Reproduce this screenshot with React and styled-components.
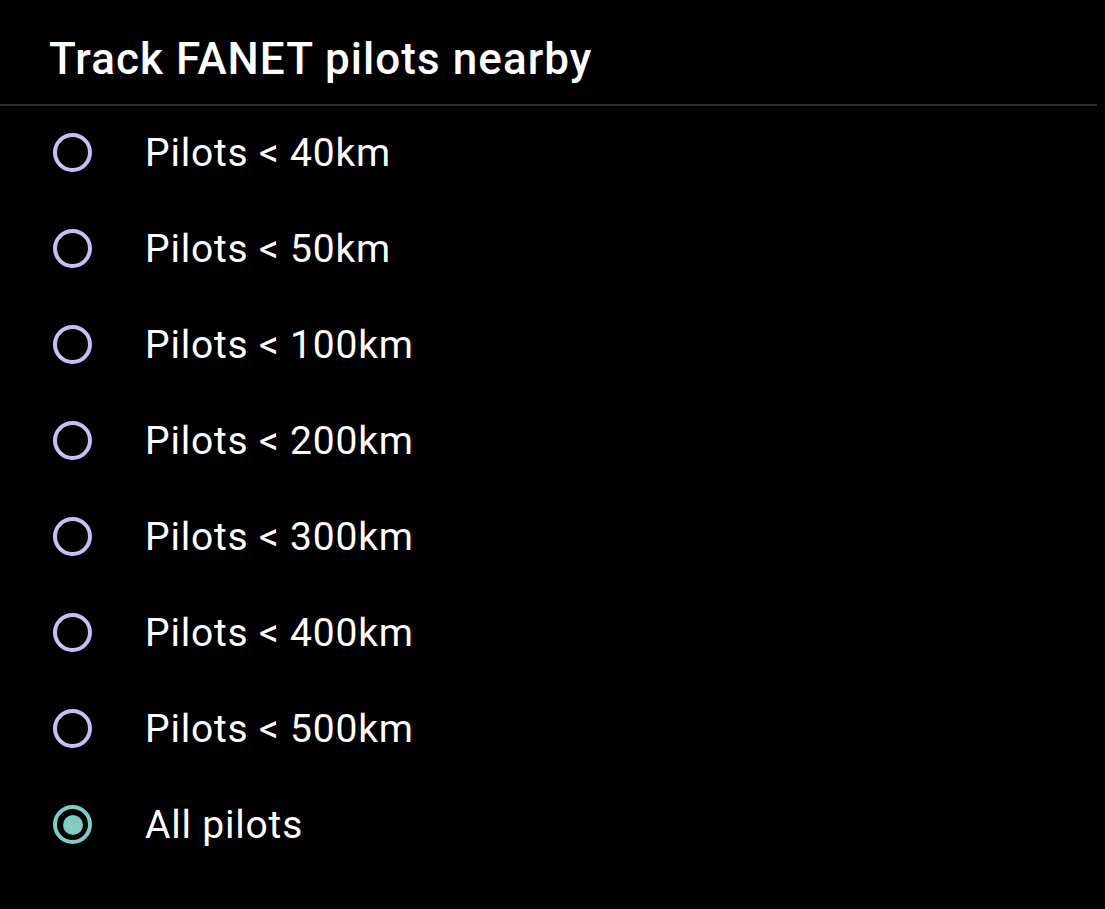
import React, { useState } from "react";
import styled, { createGlobalStyle } from "styled-components";

const options = [
  "Pilots < 40km",
  "Pilots < 50km",
  "Pilots < 100km",
  "Pilots < 200km",
  "Pilots < 300km",
  "Pilots < 400km",
  "Pilots < 500km",
  "All pilots",
];

const App = () => {
  const [selected, setSelected] = useState(options.length - 1);
  return (
    <>
      <GlobalStyle />
      <Dialog>
        <Title>Track FANET pilots nearby</Title>
        <List>
          {options.map((label, i) => (
            <Row key={label} onClick={() => setSelected(i)}>
              <Radio checked={i === selected} />
              <Label>{label}</Label>
            </Row>
          ))}
        </List>
      </Dialog>
    </>
  );
};

export default App;

const GlobalStyle = createGlobalStyle`
  html, body {
    margin: 0;
    background: #000;
    font-family: Roboto, "Noto Sans", sans-serif;
    color: #fff;
  }
`;

const Dialog = styled.div`
  width: 1097px;
  height: 909px;
  background: #000;
`;

const Title = styled.h2`
  margin: 0;
  height: 90px;
  padding: 14px 0 0 49px;
  display: flex;
  align-items: center;
  font-size: 44px;
  font-weight: 500;
  letter-spacing: 1.05px;
  border-bottom: 2px solid #2a2a2a;
  color: #fff;
`;

const List = styled.div`
  display: flex;
  flex-direction: column;
`;

const Row = styled.div`
  height: 96px;
  box-sizing: border-box;
  padding: 0 0 3px 53px;
  display: flex;
  align-items: center;
  cursor: pointer;
`;

const Radio = styled.span`
  width: 39px;
  height: 39px;
  box-sizing: border-box;
  border-radius: 50%;
  border: 4px solid ${({ checked }) => (checked ? "#80cbc4" : "#c2c0f6")};
  display: flex;
  align-items: center;
  justify-content: center;
  flex-shrink: 0;

  &::after {
    content: "";
    width: 20px;
    height: 20px;
    border-radius: 50%;
    background: #80cbc4;
    display: ${({ checked }) => (checked ? "block" : "none")};
  }
`;

const Label = styled.span`
  margin-left: 53px;
  font-size: 39px;
  font-weight: 400;
  letter-spacing: 0.8px;
  color: #fff;
`;
